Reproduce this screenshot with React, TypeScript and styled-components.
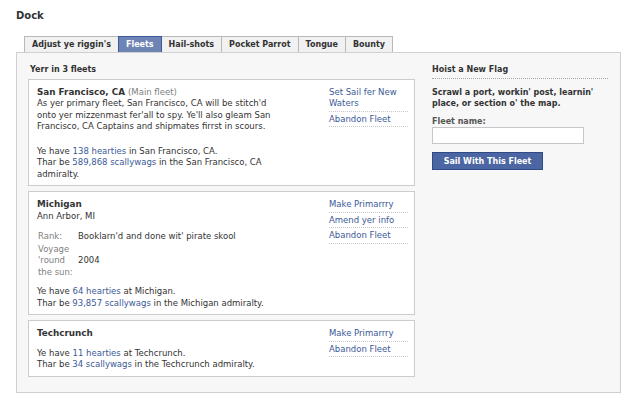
import React from "react";
import styled, { createGlobalStyle } from "styled-components";

const GlobalStyle = createGlobalStyle`
  html, body { margin: 0; padding: 0; background: #ffffff; }
  body {
    font-family: "DejaVu Sans", Verdana, sans-serif;
    font-size: 8.5px;
    line-height: 11.5px;
    color: #333333;
  }
  * { box-sizing: border-box; }
`;

const Page = styled.div`
  width: 630px;
  padding: 10px 9px 0 16px;
`;

const Title = styled.h1`
  margin: 0 0 14px;
  font-size: 10px;
  line-height: 12px;
  font-weight: bold;
  color: #333;
`;

const TabBar = styled.div`
  display: flex;
  margin-left: 8px;
  position: relative;
  z-index: 1;
`;

const Tab = styled.div<{ $active?: boolean }>`
  height: 16px;
  padding: 2px 7px 0;
  margin-right: -1px;
  font-size: 8px;
  font-weight: bold;
  white-space: nowrap;
  border: 1px solid ${(p) => (p.$active ? "#3b5998" : "#b8b8b8")};
  border-bottom: 0;
  background: ${(p) => (p.$active ? "#6d84b4" : "#f1f1f1")};
  color: ${(p) => (p.$active ? "#ffffff" : "#333333")};
  position: relative;
  z-index: ${(p) => (p.$active ? 2 : 1)};
`;

const Panel = styled.div`
  width: 605px;
  display: flex;
  gap: 17px;
  padding: 11px 12px 15px 11px;
  background: #f7f7f7;
  border: 1px solid #cfcfcf;
`;

const LeftColumn = styled.div`
  width: 387px;
  flex: none;
  display: flex;
  flex-direction: column;
  gap: 5px;
`;

const RightColumn = styled.div`
  width: 176px;
  flex: none;
`;

const SectionHeader = styled.div<{ $rule?: boolean }>`
  font-size: 8px;
  font-weight: bold;
  color: #333;
  padding-left: ${(p) => (p.$rule ? 0 : 2)}px;
  padding-bottom: 2px;
  margin-bottom: ${(p) => (p.$rule ? 0 : -4)}px;
  border-bottom: ${(p) => (p.$rule ? "1px dotted #a8a8a8" : "0")};
`;

const Card = styled.div`
  display: flex;
  background: #ffffff;
  border: 1px solid #cccccc;
  padding: 7px 6px 5px 8px;
`;

const CardMain = styled.div`
  flex: 1;
  min-width: 0;
`;

const CardTitle = styled.div`
  font-size: 8.8px;
  font-weight: bold;
  color: #333;
`;

const Muted = styled.span`
  font-size: 8.5px;
  font-weight: normal;
  color: #808080;
`;

const Text = styled.div<{ $gap?: number }>`
  margin-top: ${(p) => p.$gap ?? 0}px;
  max-width: 245px;
`;

const Link = styled.a`
  color: #3b5998;
  text-decoration: none;
  cursor: pointer;
`;

const Actions = styled.div`
  width: 79px;
  flex: none;
  margin-top: -2px;
`;

const ActionItem = styled.div`
  padding: 2px 0 1px;
  border-bottom: 1px dotted #c8c8c8;
`;

const InfoTable = styled.table`
  border-collapse: collapse;
  margin-top: 9px;
  td {
    padding: 0;
    vertical-align: middle;
  }
  tr:first-child td {
    padding-bottom: 1px;
  }
`;

const InfoLabel = styled.td`
  width: 41px;
  padding-left: 1px !important;
  color: #808080;
`;

const InfoValue = styled.td`
  color: #333;
`;

const Prompt = styled.div`
  margin-top: 8px;
  font-size: 8px;
  font-weight: bold;
  color: #333;
`;

const FieldLabel = styled.label`
  display: block;
  margin-top: 6px;
  font-size: 8px;
  font-weight: bold;
  color: #555;
`;

const Input = styled.input`
  display: block;
  width: 152px;
  height: 17px;
  margin: 0;
  border: 1px solid #c6c6c6;
  background: #fff;
  font: inherit;
`;

const Button = styled.button`
  display: block;
  margin-top: 8px;
  width: 111px;
  height: 18px;
  padding: 0;
  background: #4b66a2;
  border: 1px solid #2f4a85;
  color: #ffffff;
  font-family: inherit;
  font-size: 8px;
  font-weight: bold;
`;

type StatProps = { hearties: string; place: string; wags: string; admiralty: string; gap: number; sf?: boolean };

const Stats: React.FC<StatProps> = ({ hearties, place, wags, admiralty, gap, sf }) => (
  <Text $gap={gap}>
    Ye have <Link>{hearties} hearties</Link> {sf ? "in" : "at"} {place}.
    <br />
    Thar be <Link>{wags} scallywags</Link> in the {admiralty} admiralty.
  </Text>
);

export default function App() {
  const tabs = ["Adjust ye riggin's", "Fleets", "Hail-shots", "Pocket Parrot", "Tongue", "Bounty"];
  return (
    <Page>
      <GlobalStyle />
      <Title>Dock</Title>
      <TabBar>
        {tabs.map((t) => (
          <Tab key={t} $active={t === "Fleets"}>
            {t}
          </Tab>
        ))}
      </TabBar>
      <Panel>
        <LeftColumn>
          <SectionHeader>Yerr in 3 fleets</SectionHeader>

          <Card>
            <CardMain>
              <CardTitle>
                San Francisco, CA <Muted>(Main fleet)</Muted>
              </CardTitle>
              <Text>
                As yer primary fleet, San Francisco, CA will be stitch'd onto yer mizzenmast fer'all to spy. Ye'll also
                gleam San Francisco, CA Captains and shipmates firrst in scours.
              </Text>
              <Stats gap={13} sf hearties="138" place="San Francisco, CA" wags="589,868" admiralty="San Francisco, CA" />
            </CardMain>
            <Actions>
              <ActionItem>
                <Link>Set Sail fer New Waters</Link>
              </ActionItem>
              <ActionItem>
                <Link>Abandon Fleet</Link>
              </ActionItem>
            </Actions>
          </Card>

          <Card>
            <CardMain>
              <CardTitle>Michigan</CardTitle>
              <div>Ann Arbor, MI</div>
              <InfoTable>
                <tbody>
                  <tr>
                    <InfoLabel>Rank:</InfoLabel>
                    <InfoValue>Booklarn'd and done wit' pirate skool</InfoValue>
                  </tr>
                  <tr>
                    <InfoLabel>Voyage 'round the sun:</InfoLabel>
                    <InfoValue>2004</InfoValue>
                  </tr>
                </tbody>
              </InfoTable>
              <Stats gap={8} hearties="64" place="Michigan" wags="93,857" admiralty="Michigan" />
            </CardMain>
            <Actions>
              <ActionItem>
                <Link>Make Primarrry</Link>
              </ActionItem>
              <ActionItem>
                <Link>Amend yer info</Link>
              </ActionItem>
              <ActionItem>
                <Link>Abandon Fleet</Link>
              </ActionItem>
            </Actions>
          </Card>

          <Card>
            <CardMain>
              <CardTitle>Techcrunch</CardTitle>
              <Stats gap={8} hearties="11" place="Techcrunch" wags="34" admiralty="Techcrunch" />
            </CardMain>
            <Actions>
              <ActionItem>
                <Link>Make Primarrry</Link>
              </ActionItem>
              <ActionItem>
                <Link>Abandon Fleet</Link>
              </ActionItem>
            </Actions>
          </Card>
        </LeftColumn>

        <RightColumn>
          <SectionHeader $rule>Hoist a New Flag</SectionHeader>
          <Prompt>Scrawl a port, workin' post, learnin' place, or section o' the map.</Prompt>
          <FieldLabel htmlFor="fleet-name">Fleet name:</FieldLabel>
          <Input id="fleet-name" type="text" />
          <Button type="button">Sail With This Fleet</Button>
        </RightColumn>
      </Panel>
    </Page>
  );
}
